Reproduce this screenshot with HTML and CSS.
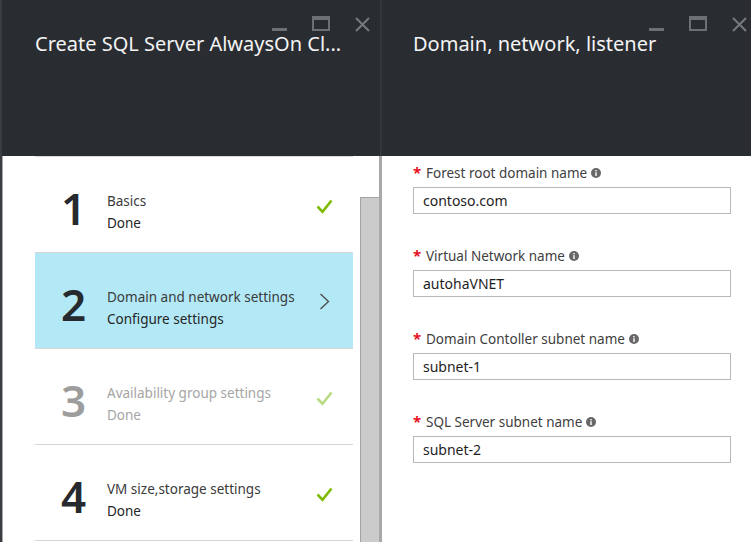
FILE: index.html
```html
<!DOCTYPE html>
<html lang="en">
<head>
<meta charset="utf-8">
<title>Create SQL Server AlwaysOn Cluster</title>
<link rel="stylesheet" href="styles.css">
</head>
<body>
<div class="screen">
  <div class="edge"></div>

  <section class="blade blade-left">
    <header class="blade-header">
      <div class="controls">
        <span class="ctl ctl-min"></span>
        <span class="ctl ctl-max"></span>
        <svg class="ctl ctl-close" width="15" height="15" viewBox="0 0 15 15"><path d="M1 1 L14 14 M14 1 L1 14" stroke="#76797d" stroke-width="2" fill="none"/></svg>
      </div>
      <h1 class="blade-title">Create SQL Server AlwaysOn Cl...</h1>
    </header>
    <div class="blade-body">
      <ul class="steps">
        <li class="step">
          <span class="step-num">1</span>
          <div class="step-text">
            <div class="step-title">Basics</div>
            <div class="step-status">Done</div>
          </div>
          <svg class="step-icon check" width="17" height="15" viewBox="0 0 17 15"><polyline points="1.5,7.5 6.5,12.8 15.5,1.5" stroke="#7fba00" stroke-width="2.6" fill="none"/></svg>
        </li>
        <li class="step step-active">
          <span class="step-num">2</span>
          <div class="step-text">
            <div class="step-title">Domain and network settings</div>
            <div class="step-status">Configure settings</div>
          </div>
          <svg class="step-icon chevron" width="11" height="17" viewBox="0 0 11 17"><polyline points="1.5,1 9.5,8.5 1.5,16" stroke="#4a4a4a" stroke-width="1.3" fill="none"/></svg>
        </li>
        <li class="step step-disabled">
          <span class="step-num">3</span>
          <div class="step-text">
            <div class="step-title">Availability group settings</div>
            <div class="step-status">Done</div>
          </div>
          <svg class="step-icon check" width="17" height="15" viewBox="0 0 17 15"><polyline points="1.5,7.5 6.5,12.8 15.5,1.5" stroke="#b8da82" stroke-width="2.6" fill="none"/></svg>
        </li>
        <li class="step">
          <span class="step-num">4</span>
          <div class="step-text">
            <div class="step-title">VM size,storage settings</div>
            <div class="step-status">Done</div>
          </div>
          <svg class="step-icon check" width="17" height="15" viewBox="0 0 17 15"><polyline points="1.5,7.5 6.5,12.8 15.5,1.5" stroke="#7fba00" stroke-width="2.6" fill="none"/></svg>
        </li>
      </ul>
      <div class="scrollbar">
        <div class="thumb"></div>
      </div>
    </div>
  </section>

  <div class="divider">
    <div class="divider-top"></div>
    <div class="divider-bottom"></div>
  </div>

  <section class="blade blade-right">
    <header class="blade-header">
      <div class="controls">
        <span class="ctl ctl-min"></span>
        <span class="ctl ctl-max"></span>
        <svg class="ctl ctl-close" width="15" height="15" viewBox="0 0 15 15"><path d="M1 1 L14 14 M14 1 L1 14" stroke="#76797d" stroke-width="2" fill="none"/></svg>
      </div>
      <h1 class="blade-title">Domain, network, listener</h1>
    </header>
    <div class="blade-body form">
      <div class="field">
        <label class="field-label"><span class="req">*</span>Forest root domain name<svg class="info" width="10" height="10" viewBox="0 0 10 10"><circle cx="5" cy="5" r="5" fill="#686868"/><rect x="4.3" y="4.2" width="1.4" height="3.8" fill="#fff"/><rect x="4.3" y="2" width="1.4" height="1.4" fill="#fff"/></svg></label>
        <div class="input">contoso.com</div>
      </div>
      <div class="field">
        <label class="field-label"><span class="req">*</span>Virtual Network name<svg class="info" width="10" height="10" viewBox="0 0 10 10"><circle cx="5" cy="5" r="5" fill="#686868"/><rect x="4.3" y="4.2" width="1.4" height="3.8" fill="#fff"/><rect x="4.3" y="2" width="1.4" height="1.4" fill="#fff"/></svg></label>
        <div class="input">autohaVNET</div>
      </div>
      <div class="field">
        <label class="field-label"><span class="req">*</span>Domain Contoller subnet name<svg class="info" width="10" height="10" viewBox="0 0 10 10"><circle cx="5" cy="5" r="5" fill="#686868"/><rect x="4.3" y="4.2" width="1.4" height="3.8" fill="#fff"/><rect x="4.3" y="2" width="1.4" height="1.4" fill="#fff"/></svg></label>
        <div class="input">subnet-1</div>
      </div>
      <div class="field">
        <label class="field-label"><span class="req">*</span>SQL Server subnet name<svg class="info" width="10" height="10" viewBox="0 0 10 10"><circle cx="5" cy="5" r="5" fill="#686868"/><rect x="4.3" y="4.2" width="1.4" height="3.8" fill="#fff"/><rect x="4.3" y="2" width="1.4" height="1.4" fill="#fff"/></svg></label>
        <div class="input">subnet-2</div>
      </div>
    </div>
  </section>
</div>
</body>
</html>
```

FILE: styles.css
```css
* { box-sizing: border-box; }

html, body {
  margin: 0;
  padding: 0;
  background: #ffffff;
}

body {
  font-family: "Noto Sans", "Open Sans", sans-serif;
  overflow: hidden;
}

.screen {
  display: flex;
  width: 751px;
  height: 542px;
  overflow: hidden;
}

.edge {
  width: 2px;
  flex: none;
  background: #3a3e43;
}

.blade {
  display: flex;
  flex-direction: column;
  flex: none;
}

.blade-left { width: 377px; }
.blade-right { width: 369px; }

.blade-header {
  height: 156px;
  flex: none;
  background: #292d32;
  display: flex;
  flex-direction: column;
}

.controls {
  display: flex;
  justify-content: flex-end;
  align-items: flex-end;
  height: 23px;
  margin-top: 8px;
  gap: 25px;
}

.blade-left .controls { padding-right: 9px; }
.blade-right .controls { padding-right: 4px; }

.ctl { display: block; flex: none; }

.ctl-min {
  width: 15px;
  height: 3px;
  background: #6c6f73;
}

.ctl-max {
  width: 18px;
  height: 15px;
  border: 2px solid #6c6f73;
  border-top-width: 4px;
}

.ctl-close { width: 15px; height: 15px; margin-bottom: -1px; }

.blade-title {
  margin: -1px 0 0 0;
  font-weight: 400;
  font-size: 20px;
  line-height: 28px;
  color: #f4f4f4;
  white-space: nowrap;
}

.blade-left .blade-title { padding-left: 33px; }
.blade-right .blade-title { padding-left: 31px; }

.blade-body {
  flex: 1;
  background: #fff;
}

.blade-left .blade-body {
  display: flex;
  border-left: 1px solid #a9a9a9;
  padding-left: 32px;
}

.steps {
  list-style: none;
  margin: 0;
  padding: 0;
  width: 318px;
  flex: none;
  border-top: 1px solid #dadada;
}

.step {
  height: 96px;
  display: flex;
  align-items: flex-start;
  padding: 0 20px 0 26px;
  border-bottom: 1px solid #d6d6d6;
  color: #2b2b2b;
}

.step-active { background: #b3e8f6; }

.step-num {
  width: 46px;
  flex: none;
  font-size: 44px;
  font-weight: 600;
  line-height: 50px;
  margin-top: 26px;
  color: #262a2e;
}

.step-text {
  flex: 1;
  margin-top: 33px;
  font-size: 13.5px;
  line-height: 22px;
}

.step-title { color: #3a3a3a; }
.step-status { color: #252525; }

.step-icon { flex: none; display: block; }
.check { margin-top: 42px; }
.chevron { margin-top: 40px; margin-right: 3px; }

.step-disabled .step-num { color: #9d9d9d; }
.step-disabled .step-title,
.step-disabled .step-status { color: #a5a5a5; }

.scrollbar {
  margin-left: 7px;
  width: 19px;
  flex: none;
  padding-top: 41px;
  display: flex;
  flex-direction: column;
}

.thumb {
  flex: 1;
  background: #cbcbcb;
  border: 1px solid #a2a2a2;
  border-right: none;
  border-bottom: none;
}

.divider {
  width: 3px;
  flex: none;
  display: flex;
  flex-direction: column;
}

.divider-top {
  height: 156px;
  background: #33373c;
  border-left: 1px solid #292d32;
}

.divider-bottom {
  flex: 1;
  background: #a8a8a8;
}

.form {
  padding: 8px 0 0 31px;
}

.field { margin-bottom: 33px; }

.field-label {
  display: flex;
  align-items: center;
  height: 18px;
  font-size: 13.5px;
  line-height: 18px;
  color: #404040;
}

.req {
  width: 13px;
  flex: none;
  color: #e81123;
  font-size: 15px;
  font-weight: 700;
  align-self: flex-start;
  line-height: 16px;
}

.info {
  margin-left: 4px;
  flex: none;
}

.input {
  margin-top: 5px;
  width: 318px;
  height: 27px;
  border: 1px solid #b8b8b8;
  padding-left: 9px;
  font-size: 14px;
  line-height: 25px;
  color: #1e1e1e;
}
```
